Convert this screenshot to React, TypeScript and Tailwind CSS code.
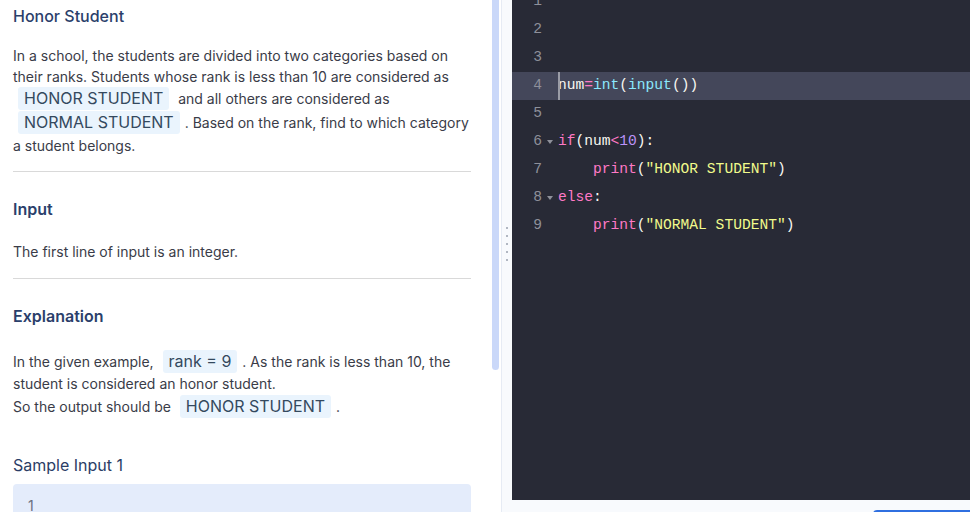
import type { ReactElement, ReactNode } from "react";

const Chip = ({ children, tight }: { children: ReactNode; tight?: boolean }): ReactElement => (
  <span
    className={`mx-[5px] inline-block rounded-[3px] bg-[#eaf4fd] px-[6px] py-px text-[16px] leading-[21px] text-[#34495e] ${
      tight ? "" : "mb-px"
    }`}
  >
    {children}
  </span>
);

const Divider = (): ReactElement => <div className="h-px w-full bg-[#d9d9d9]" />;

type Token = { t: string; c: string };

const W = "text-[#f8f8f2]";
const P = "text-[#ff79c6]";
const C = "text-[#8be9fd]";
const Y = "text-[#f1fa8c]";
const V = "text-[#bd93f9]";

const lines: { n: number; fold?: boolean; indent?: boolean; active?: boolean; tokens: Token[] }[] = [
  { n: 1, tokens: [] },
  { n: 2, tokens: [] },
  { n: 3, tokens: [] },
  {
    n: 4,
    active: true,
    tokens: [
      { t: "num", c: W },
      { t: "=", c: P },
      { t: "int", c: C },
      { t: "(", c: W },
      { t: "input", c: C },
      { t: "())", c: W },
    ],
  },
  { n: 5, tokens: [] },
  {
    n: 6,
    fold: true,
    tokens: [
      { t: "if", c: P },
      { t: "(num", c: W },
      { t: "<", c: P },
      { t: "10", c: V },
      { t: "):", c: W },
    ],
  },
  {
    n: 7,
    indent: true,
    tokens: [
      { t: "print", c: P },
      { t: "(", c: W },
      { t: '"HONOR STUDENT"', c: Y },
      { t: ")", c: W },
    ],
  },
  {
    n: 8,
    fold: true,
    tokens: [
      { t: "else", c: P },
      { t: ":", c: W },
    ],
  },
  {
    n: 9,
    indent: true,
    tokens: [
      { t: "print", c: P },
      { t: "(", c: W },
      { t: '"NORMAL STUDENT"', c: Y },
      { t: ")", c: W },
    ],
  },
];

const Editor = (): ReactElement => (
  <div className="h-[500px] shrink-0 overflow-hidden bg-[#282a36] font-['Liberation_Mono',monospace] text-[14.6px]">
    <div className="-mt-[12px] flex flex-col">
      {lines.map((line) => (
        <div
          key={line.n}
          className={`flex h-[28px] items-center ${line.active ? "bg-[#44475a]" : ""}`}
        >
          <div className="flex w-[46px] items-center">
            <span className="w-[30px] text-right text-[#8e909a]">{line.n}</span>
            <span className="flex w-[16px] justify-center">
              {line.fold && (
                <svg width="6" height="4" viewBox="0 0 6 4">
                  <path d="M0 0 L6 0 L3 4 Z" fill="#8e909a" />
                </svg>
              )}
            </span>
          </div>
          <div className="relative flex h-full items-center whitespace-pre">
            {line.active && <span className="absolute top-0 left-0 h-full w-[2px] bg-[#9a9ca6]" />}
            {line.indent && <span className="inline-block w-[35px]" />}
            {line.tokens.map((tk, i) => (
              <span key={i} className={tk.c}>
                {tk.t}
              </span>
            ))}
          </div>
        </div>
      ))}
    </div>
  </div>
);

export default function App(): ReactElement {
  return (
    <div className="flex h-[512px] w-[970px] overflow-hidden bg-white font-['Inter',sans-serif]">
      {/* Problem description */}
      <div className="h-full w-[492px] overflow-hidden pr-[21px] pl-[13px]">
        <h1 className="pt-[6px] text-[16px] leading-[20px] font-medium text-[#2b3f6b]">Honor Student</h1>
        <p className="mt-[19px] text-[14px] leading-[21px] text-[#3a3c48]">
          In a school, the students are divided into two categories based on their ranks. Students
          whose rank is less than 10 are considered as
          <Chip>HONOR STUDENT</Chip> and all others are considered as
          <Chip>NORMAL STUDENT</Chip>. Based on the rank, find to which category a student
          belongs.
        </p>
        <div className="mt-[15px]">
          <Divider />
        </div>
        <h2 className="mt-[27px] text-[16px] leading-[20px] font-semibold text-[#2b3f6b]">Input</h2>
        <p className="mt-[22px] text-[14px] leading-[21px] text-[#3a3c48]">
          The first line of input is an integer.
        </p>
        <div className="mt-[16px]">
          <Divider />
        </div>
        <h2 className="mt-[27px] text-[16px] leading-[20px] font-semibold text-[#2b3f6b]">
          Explanation
        </h2>
        <p className="mt-[24px] text-[14px] leading-[22px] text-[#3a3c48]">
          In the given example,&nbsp;
          <Chip tight>rank = 9</Chip>. As the rank is less than 10, the student is considered an
          honor student.
          <br />
          So the output should be&nbsp;
          <Chip tight>HONOR STUDENT</Chip>.
        </p>
        <h3 className="mt-[37px] text-[16px] leading-[20px] text-[#2b3d66]">Sample Input 1</h3>
        <div className="mt-[9px] h-[60px] rounded-[4px] bg-[#e4ecfb] px-[15px] pt-[11px] text-[14px] text-[#6b7080]">
          1
        </div>
      </div>

      {/* Scrollbar */}
      <div className="h-full w-[7px]">
        <div className="h-[370px] w-full rounded-b-[4px] bg-[#cad8f9]" />
      </div>

      {/* Splitter */}
      <div className="ml-[2px] flex h-full w-[11px] flex-col items-center justify-center border-l border-[#e6ebf4] bg-[#f8fafd]">
        <div className="mb-[24px] flex flex-col gap-[6px]">
          {[0, 1, 2, 3, 4].map((i) => (
            <span key={i} className="block h-[2px] w-[2px] rounded-full bg-[#9aa0ae]" />
          ))}
        </div>
      </div>

      {/* Code editor */}
      <div className="flex h-full flex-1 flex-col bg-[#f8fafd]">
        <Editor />
        <div className="flex flex-1 justify-end pt-[10px]">
          <div className="h-[10px] w-[97px] rounded-tl-[4px] bg-[#2f6fe0]" />
        </div>
      </div>
    </div>
  );
}
